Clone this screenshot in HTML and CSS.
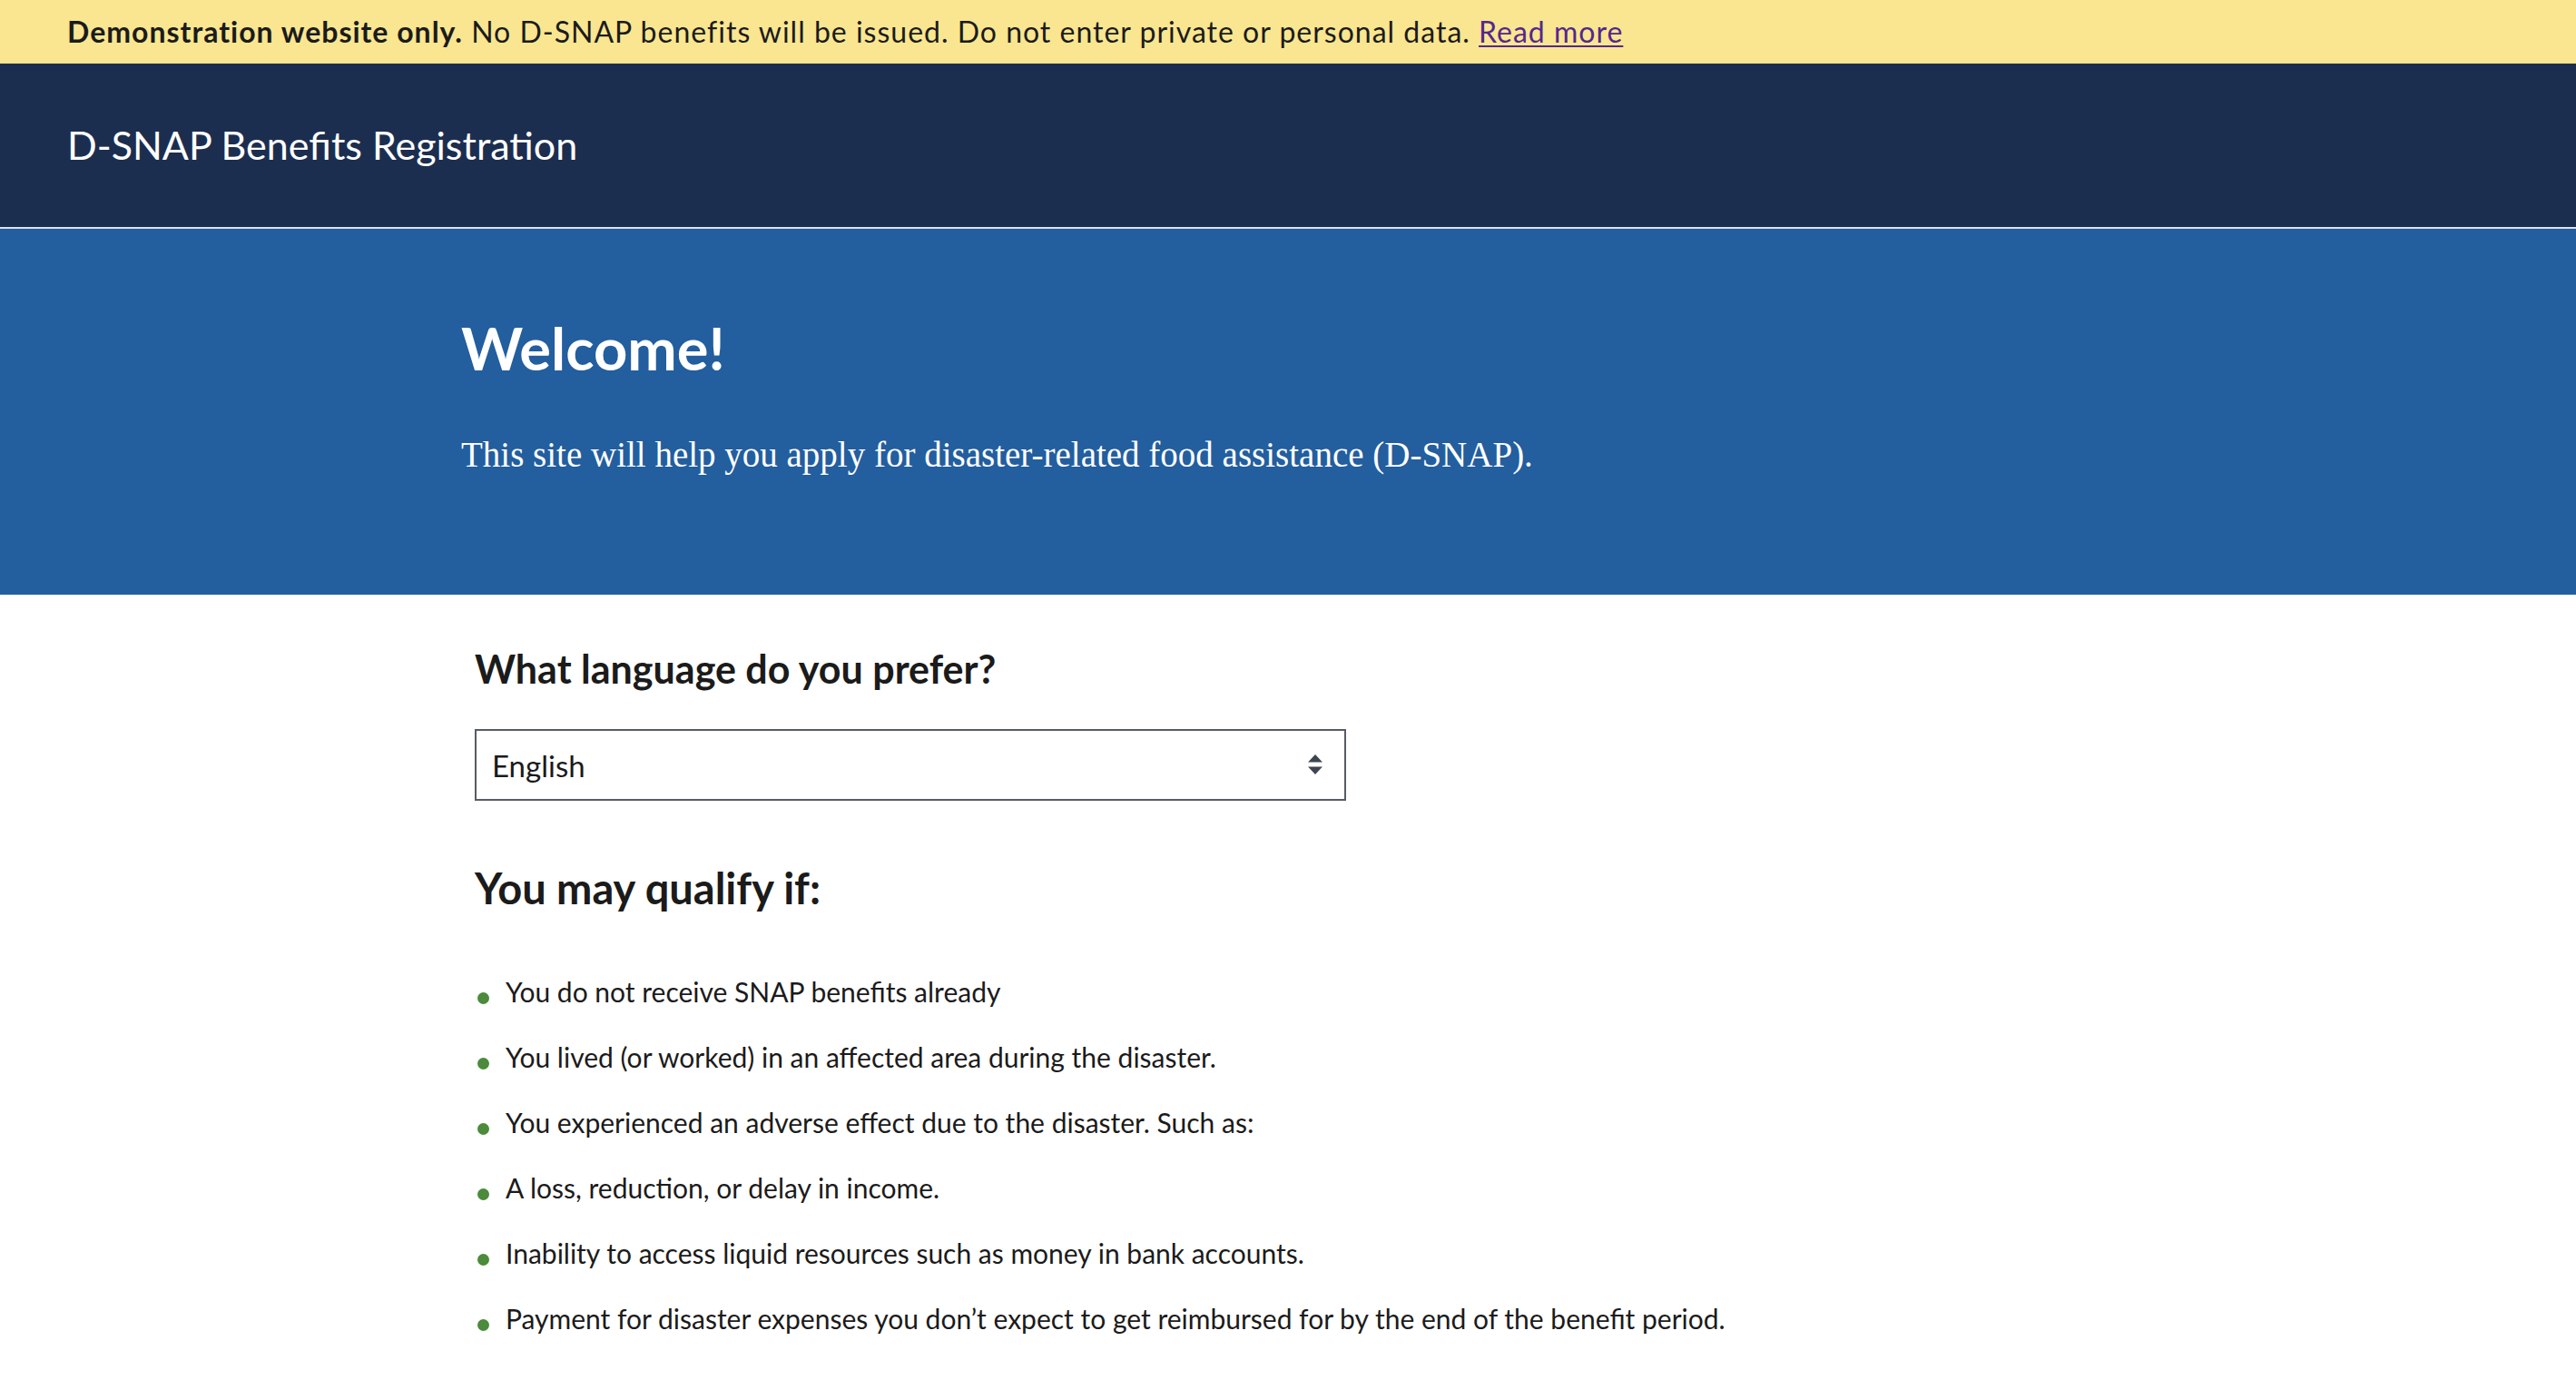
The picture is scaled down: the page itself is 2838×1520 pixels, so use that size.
FILE: index.html
```html
<!DOCTYPE html>
<html lang="en">
<head>
<meta charset="utf-8">
<title>D-SNAP Benefits Registration</title>
<link rel="stylesheet" href="styles.css">
</head>
<body>
<div class="banner">
  <p><strong>Demonstration website only.</strong> No D-SNAP benefits will be issued. Do not enter private or personal data. <a href="#" class="banner-link">Read more</a></p>
</div>
<header class="site-header">
  <div class="site-title">D-SNAP Benefits Registration</div>
</header>
<section class="hero">
  <div class="container">
    <h1 class="hero-title">Welcome!</h1>
    <p class="hero-text">This site will help you apply for disaster-related food assistance (D-SNAP).</p>
  </div>
</section>
<main class="container main">
  <h2 class="lang-title">What language do you prefer?</h2>
  <div class="select-wrap">
    <select class="lang-select" aria-label="Language">
      <option>English</option>
      <option>Español</option>
    </select>
    <svg class="select-icon" width="16" height="22" viewBox="0 0 16 22" aria-hidden="true">
      <path d="M8 0 L16 8.5 L0 8.5 Z" fill="#3d4551"/>
      <path d="M0 13.5 L16 13.5 L8 22 Z" fill="#3d4551"/>
    </svg>
  </div>
  <h2 class="qualify-title">You may qualify if:</h2>
  <ul class="qualify-list">
    <li>You do not receive SNAP benefits already</li>
    <li>You lived (or worked) in an affected area during the disaster.</li>
    <li>You experienced an adverse effect due to the disaster. Such as:</li>
    <li>A loss, reduction, or delay in income.</li>
    <li>Inability to access liquid resources such as money in bank accounts.</li>
    <li>Payment for disaster expenses you don’t expect to get reimbursed for by the end of the benefit period.</li>
  </ul>
</main>
</body>
</html>
```
FILE: styles.css
```css
* { box-sizing: border-box; }

html, body {
  margin: 0;
  padding: 0;
  background: #ffffff;
  color: #1b1b1b;
  font-family: Lato, "Open Sans", "Liberation Sans", sans-serif;
}

.banner {
  background: #fae690;
  height: 70px;
  display: flex;
  align-items: center;
  padding: 0 74px;
}

.banner p {
  margin: 0;
  font-size: 32px;
  letter-spacing: 1px;
  line-height: 70px;
  color: #1b1b1b;
  white-space: nowrap;
}

.banner strong { font-weight: 700; }

.banner-link {
  color: #54278f;
  text-decoration: underline;
  text-underline-offset: 3px;
  text-decoration-thickness: 2px;
}

.site-header {
  background: #1c2e50;
  height: 182px;
  border-bottom: 2px solid #dfe1e2;
  display: flex;
  align-items: center;
  padding: 0 74px;
}

.site-title {
  color: #ffffff;
  font-size: 43px;
  line-height: 52px;
}

.container {
  max-width: 1822px;
  margin: 0 auto;
}

.hero {
  background: #235e9e;
  padding: 93px 0 127px;
  color: #ffffff;
}

.hero-title {
  margin: 0;
  font-size: 65px;
  line-height: 77px;
  font-weight: 700;
}

.hero-text {
  margin: 52px 0 0;
  font-family: "Liberation Serif", "DejaVu Serif", serif;
  font-size: 39px;
  line-height: 54px;
}

.main {
  padding: 56px 0 40px 15px;
}

.lang-title {
  margin: 0;
  font-size: 43px;
  line-height: 52px;
  font-weight: 700;
}

.select-wrap {
  position: relative;
  width: 960px;
  margin-top: 40px;
}

.lang-select {
  display: block;
  width: 100%;
  height: 79px;
  appearance: none;
  -webkit-appearance: none;
  background: #ffffff;
  border: 2px solid #565c65;
  border-radius: 0;
  padding: 0 60px 0 17px;
  font-family: Lato, "Open Sans", "Liberation Sans", sans-serif;
  font-size: 33px;
  color: #1b1b1b;
}

.select-icon {
  position: absolute;
  right: 26px;
  top: 28px;
  pointer-events: none;
}

.qualify-title {
  margin: 68px 0 0;
  font-size: 47px;
  line-height: 56px;
  font-weight: 700;
}

.qualify-list {
  list-style: none;
  margin: 50px 0 0;
  padding: 0;
}

.qualify-list li {
  display: flex;
  align-items: center;
  gap: 18px;
  font-size: 30px;
  line-height: 72px;
  padding-left: 3px;
  white-space: nowrap;
}

.qualify-list li::before {
  content: "";
  flex: 0 0 13px;
  width: 13px;
  height: 13px;
  border-radius: 50%;
  background: #4b8b3b;
  margin-top: 14px;
}
```
